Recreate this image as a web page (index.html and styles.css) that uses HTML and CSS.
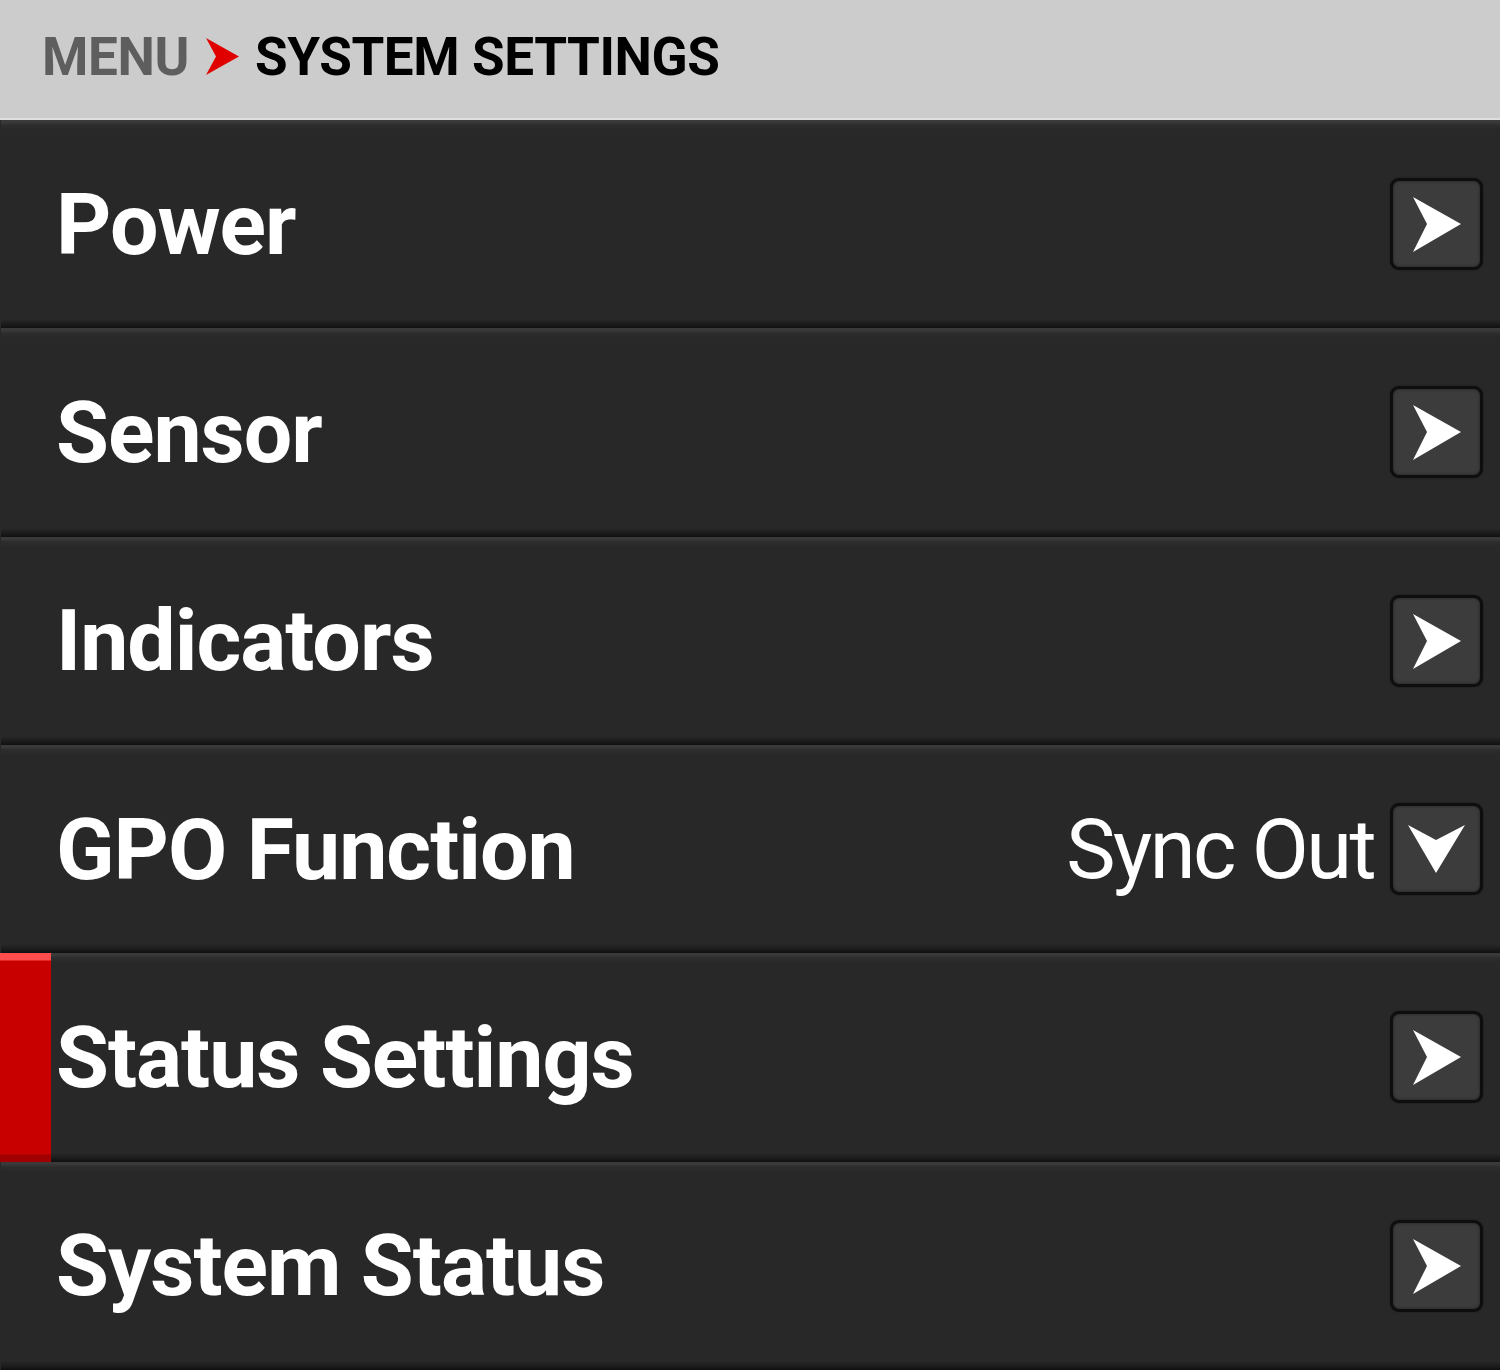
FILE: index.html
```html
<!DOCTYPE html>
<html lang="en">
<head>
<meta charset="utf-8">
<title>System Settings</title>
<link rel="stylesheet" href="styles.css">
</head>
<body>
<header class="crumbs">
  <span class="crumb-parent">MENU</span>
  <svg class="crumb-sep" width="33" height="38" viewBox="0 0 33 38"><polygon points="0,0 33,18.5 0,37 10,18.5" fill="#e00000"/></svg>
  <span class="crumb-current">SYSTEM SETTINGS</span>
</header>
<ul class="menu">
  <li class="item"><span class="label">Power</span><span class="btn"><svg width="87" height="86" viewBox="0 0 87 86"><polygon points="20,16 68,43 20,71 34,43" fill="#fff"/></svg></span></li>
  <li class="item"><span class="label">Sensor</span><span class="btn"><svg width="87" height="86" viewBox="0 0 87 86"><polygon points="20,16 68,43 20,71 34,43" fill="#fff"/></svg></span></li>
  <li class="item"><span class="label">Indicators</span><span class="btn"><svg width="87" height="86" viewBox="0 0 87 86"><polygon points="20,16 68,43 20,71 34,43" fill="#fff"/></svg></span></li>
  <li class="item"><span class="label">GPO Function</span><span class="value">Sync Out</span><span class="btn"><svg width="87" height="86" viewBox="0 0 87 86"><polygon points="15,19 43,34 72,19 43,67" fill="#fff"/></svg></span></li>
  <li class="item item-selected"><span class="label">Status Settings</span><span class="btn"><svg width="87" height="86" viewBox="0 0 87 86"><polygon points="20,16 68,43 20,71 34,43" fill="#fff"/></svg></span></li>
  <li class="item"><span class="label">System Status</span><span class="btn"><svg width="87" height="86" viewBox="0 0 87 86"><polygon points="20,16 68,43 20,71 34,43" fill="#fff"/></svg></span></li>
</ul>
</body>
</html>
```

FILE: styles.css
```css
html, body {
  margin: 0;
  padding: 0;
}
body {
  width: 1500px;
  height: 1370px;
  overflow: hidden;
  background: #282828;
  font-family: Roboto, "Liberation Sans", sans-serif;
  display: flex;
  flex-direction: column;
}
.crumbs {
  height: 114px;
  flex: none;
  background: #cccccc;
  border-bottom: 2px solid #dedede;
  display: flex;
  align-items: center;
  padding-left: 42px;
  padding-bottom: 4px;
  box-sizing: content-box;
  font-weight: 700;
  font-size: 53px;
  letter-spacing: -0.4px;
  line-height: 1;
}
.crumb-parent {
  color: #5e5e5e;
}
.crumb-sep {
  margin: 0 16px 0 17px;
}
.crumb-current {
  color: #000;
}
.menu {
  list-style: none;
  margin: 0;
  padding: 0;
  flex: 1;
  display: flex;
  flex-direction: column;
}
.item {
  position: relative;
  flex: 1;
  display: flex;
  align-items: center;
  padding: 0 17px 0 55px;
  margin-left: 1px;
  background: linear-gradient(to bottom, #3a3a3a 0, #3a3a3a 2px, #2d2d2d 5px, #282828 10px, #282828 calc(100% - 9px), #1c1c1c calc(100% - 4px), #101010 100%);
}
.label {
  flex: 1;
  color: #fff;
  font-weight: 700;
  font-size: 86px;
  letter-spacing: -1px;
  position: relative;
  z-index: 1;
}
.value {
  color: #fff;
  font-weight: 400;
  font-size: 83px;
  letter-spacing: -2.6px;
  margin-right: 16px;
}
.btn {
  width: 87px;
  height: 86px;
  border: 3px solid #0e0e0e;
  border-radius: 9px;
  background: #3c3c3c;
  box-shadow: inset 0 0 3px rgba(0,0,0,0.5), 0 0 2px rgba(0,0,0,0.4);
  display: flex;
}
.item-selected::before {
  content: "";
  position: absolute;
  left: -1px;
  top: 0;
  bottom: 0;
  width: 51px;
  background: linear-gradient(to bottom, #ff4c4c 0, #ff4c4c 7px, #c80000 8px, #c80000 calc(100% - 8px), #a00000 calc(100% - 7px), #a00000 100%);
}
```
